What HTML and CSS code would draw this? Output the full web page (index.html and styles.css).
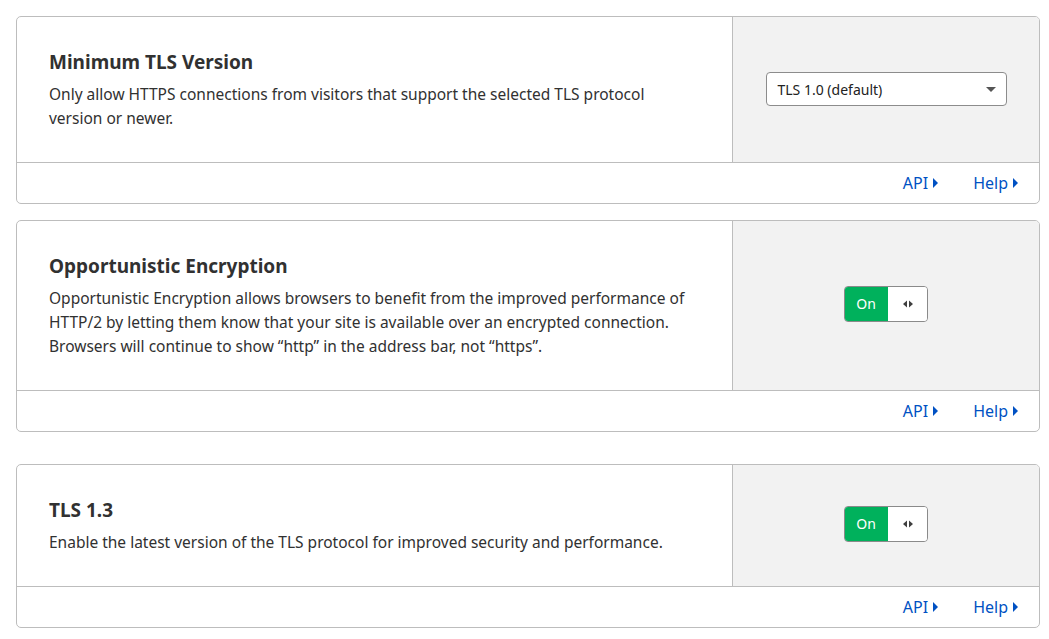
FILE: index.html
```html
<!DOCTYPE html>
<html lang="en">
<head>
    <meta charset="UTF-8">
    <title>Edge Certificates</title>
    <link rel="stylesheet" href="styles.css">
</head>
<body>
    <div class="settings">
        <div class="card">
            <div class="card-body">
                <div class="card-main">
                    <h3 class="card-title">Minimum TLS Version</h3>
                    <p class="card-text">Only allow HTTPS connections from visitors that support the selected TLS protocol version or newer.</p>
                </div>
                <div class="card-control">
                    <div class="select">
                        <span>TLS 1.0 (default)</span>
                        <span class="caret"></span>
                    </div>
                </div>
            </div>
            <div class="card-footer">
                <a href="#" class="link">API <span class="arrow"></span></a>
                <a href="#" class="link">Help <span class="arrow"></span></a>
            </div>
        </div>

        <div class="card">
            <div class="card-body">
                <div class="card-main">
                    <h3 class="card-title">Opportunistic Encryption</h3>
                    <p class="card-text">Opportunistic Encryption allows browsers to benefit from the improved performance of HTTP/2 by letting them know that your site is available over an encrypted connection. Browsers will continue to show “http” in the address bar, not “https”.</p>
                </div>
                <div class="card-control">
                    <div class="toggle">
                        <span class="toggle-on">On</span>
                        <span class="toggle-handle">
                            <svg width="12" height="10" viewBox="0 0 12 10"><path d="M5 1.5L1 5l4 3.5z M7 1.5L11 5 7 8.5z" fill="#404040"/></svg>
                        </span>
                    </div>
                </div>
            </div>
            <div class="card-footer">
                <a href="#" class="link">API <span class="arrow"></span></a>
                <a href="#" class="link">Help <span class="arrow"></span></a>
            </div>
        </div>

        <div class="card card-spaced">
            <div class="card-body">
                <div class="card-main">
                    <h3 class="card-title">TLS 1.3</h3>
                    <p class="card-text">Enable the latest version of the TLS protocol for improved security and performance.</p>
                </div>
                <div class="card-control">
                    <div class="toggle">
                        <span class="toggle-on">On</span>
                        <span class="toggle-handle">
                            <svg width="12" height="10" viewBox="0 0 12 10"><path d="M5 1.5L1 5l4 3.5z M7 1.5L11 5 7 8.5z" fill="#404040"/></svg>
                        </span>
                    </div>
                </div>
            </div>
            <div class="card-footer">
                <a href="#" class="link">API <span class="arrow"></span></a>
                <a href="#" class="link">Help <span class="arrow"></span></a>
            </div>
        </div>
    </div>
</body>
</html>
```

FILE: styles.css
```css
* {
    margin: 0;
    padding: 0;
    box-sizing: border-box;
}

body {
    font-family: "Noto Sans", "Open Sans", sans-serif;
    font-size: 15.5px;
    line-height: 1.5;
    color: #313131;
    background: #fff;
}

.settings {
    padding: 16px 9px 16px 16px;
}

.card {
    border: 1px solid #bdbdbd;
    border-radius: 5px;
    margin-bottom: 16px;
    overflow: hidden;
}

.card-spaced {
    margin-top: 32px;
}

.card-body {
    display: flex;
    border-bottom: 1px solid #bdbdbd;
}

.card-main {
    flex: 1;
    padding: 31px 40px 32px 32px;
}

.card-title {
    font-size: 19px;
    font-weight: 700;
    line-height: 28px;
    margin-bottom: 6px;
    color: #313131;
}

.card-text {
    line-height: 24px;
}

.card-control {
    width: 307px;
    flex-shrink: 0;
    background: #f2f2f2;
    border-left: 1px solid #bdbdbd;
    display: flex;
    align-items: center;
    justify-content: center;
}

.select {
    width: 241px;
    height: 34px;
    background: #fff;
    border: 1px solid #8c8c8c;
    border-radius: 4px;
    display: flex;
    align-items: center;
    justify-content: space-between;
    padding: 0 10px 0 11px;
    font-size: 14px;
    color: #222;
    margin-top: -1px;
}

.caret {
    width: 0;
    height: 0;
    border-left: 5px solid transparent;
    border-right: 5px solid transparent;
    border-top: 5px solid #555;
}

.toggle {
    display: flex;
    width: 84px;
    height: 36px;
    border: 1px solid #8a8a8a;
    border-radius: 4px;
    overflow: hidden;
    margin-top: -4px;
}

.toggle-on {
    width: 44px;
    background: #00b15c;
    color: #fff;
    font-size: 14px;
    display: flex;
    align-items: center;
    justify-content: center;
    margin: -1px 0 -1px -1px;
    border-radius: 4px 0 0 4px;
}

.toggle-handle {
    flex: 1;
    background: #fff;
    display: flex;
    align-items: center;
    justify-content: center;
}

.card-footer {
    height: 40px;
    display: flex;
    align-items: center;
    justify-content: flex-end;
    gap: 35px;
    padding-right: 21px;
}

.link {
    color: #0051c3;
    text-decoration: none;
    font-size: 16px;
    display: flex;
    align-items: center;
    gap: 5px;
}

.arrow {
    width: 0;
    height: 0;
    border-top: 5px solid transparent;
    border-bottom: 5px solid transparent;
    border-left: 5px solid #0051c3;
}
```
